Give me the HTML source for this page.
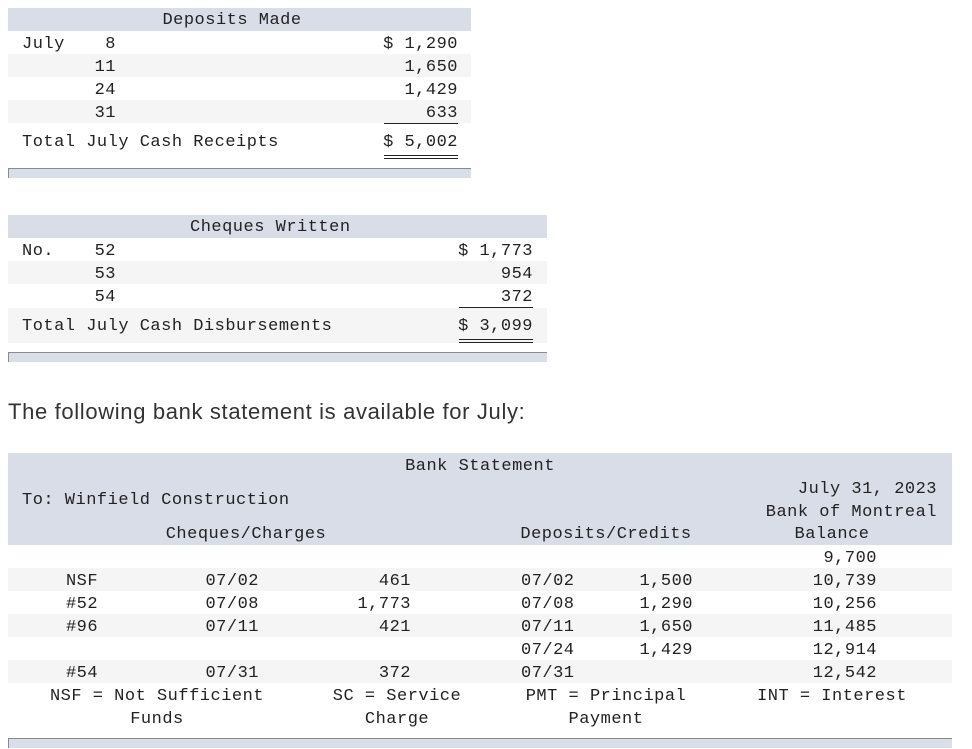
<!DOCTYPE html>
<html><head><meta charset="utf-8"><style>
body{margin:0;width:972px;height:749px;background:#fff;position:relative;overflow:hidden;font-family:"Liberation Mono",monospace;font-size:17px;color:#222}
.b{position:absolute}
.h{background:#d9dde8}
.s{background:#f5f5f5}
.t{position:absolute;line-height:20px;height:20px;white-space:nowrap;letter-spacing:0.5px;margin-top:2px}
.r{text-align:right}
.c{text-align:center}
.bar{position:absolute;background:#dadee8;border-top:1px solid #8a8a8a;border-left:1px solid #8a8a8a;height:9px}
.ul{position:absolute;height:1px;background:#222}
</style></head><body>
<!-- Table 1 -->
<div class="b h" style="left:8px;top:8px;width:463px;height:23px"></div>
<div class="b s" style="left:8px;top:54px;width:463px;height:23px"></div>
<div class="b s" style="left:8px;top:100px;width:463px;height:23px"></div>
<div class="t c" style="left:0;width:464px;top:9px">Deposits Made</div>
<div class="t" style="left:22px;top:33px">July</div>
<div class="t r" style="left:60px;width:56px;top:33px">8</div>
<div class="t r" style="left:60px;width:56px;top:56px">11</div>
<div class="t r" style="left:60px;width:56px;top:79px">24</div>
<div class="t r" style="left:60px;width:56px;top:102px">31</div>
<div class="t r" style="left:300px;width:158px;top:33px">$ 1,290</div>
<div class="t r" style="left:300px;width:158px;top:56px">1,650</div>
<div class="t r" style="left:300px;width:158px;top:79px">1,429</div>
<div class="t r" style="left:300px;width:158px;top:102px">633</div>
<div class="ul" style="left:384px;width:74px;top:123px"></div>
<div class="t" style="left:22px;top:131px">Total July Cash Receipts</div>
<div class="t r" style="left:300px;width:158px;top:131px">$ 5,002</div>
<div class="ul" style="left:384px;width:74px;top:155px"></div>
<div class="ul" style="left:384px;width:74px;top:158px"></div>
<div class="bar" style="left:8px;top:168px;width:462px"></div>

<!-- Table 2 -->
<div class="b h" style="left:8px;top:215px;width:539px;height:23px"></div>
<div class="b s" style="left:8px;top:261px;width:539px;height:23px"></div>
<div class="b s" style="left:8px;top:308px;width:539px;height:35px"></div>
<div class="t" style="left:190px;top:216px">Cheques Written</div>
<div class="t" style="left:22px;top:240px">No.</div>
<div class="t r" style="left:60px;width:56px;top:240px">52</div>
<div class="t r" style="left:60px;width:56px;top:263px">53</div>
<div class="t r" style="left:60px;width:56px;top:286px">54</div>
<div class="t r" style="left:380px;width:153px;top:240px">$ 1,773</div>
<div class="t r" style="left:380px;width:153px;top:263px">954</div>
<div class="t r" style="left:380px;width:153px;top:286px">372</div>
<div class="ul" style="left:459px;width:74px;top:307px"></div>
<div class="t" style="left:22px;top:315px">Total July Cash Disbursements</div>
<div class="t r" style="left:380px;width:153px;top:315px">$ 3,099</div>
<div class="ul" style="left:459px;width:74px;top:339px"></div>
<div class="ul" style="left:459px;width:74px;top:342px"></div>
<div class="bar" style="left:8px;top:352px;width:538px"></div>

<div class="t" style="left:8px;top:397px;height:26px;line-height:26px;font-family:'Liberation Sans',sans-serif;font-size:22px;color:#333;letter-spacing:0.65px">The following bank statement is available for July:</div>

<!-- Bank statement -->
<div class="b h" style="left:8px;top:453px;width:944px;height:92px"></div>
<div class="b s" style="left:8px;top:568px;width:944px;height:23px"></div>
<div class="b s" style="left:8px;top:614px;width:944px;height:23px"></div>
<div class="b s" style="left:8px;top:660px;width:944px;height:23px"></div>
<div class="t c" style="left:280px;width:400px;top:455px">Bank Statement</div>
<div class="t" style="left:22px;top:489px">To: Winfield Construction</div>
<div class="t r" style="left:700px;width:237px;top:478px">July 31, 2023</div>
<div class="t r" style="left:700px;width:237px;top:501px">Bank of Montreal</div>
<div class="t c" style="left:96px;width:300px;top:523px">Cheques/Charges</div>
<div class="t c" style="left:456px;width:300px;top:523px">Deposits/Credits</div>
<div class="t c" style="left:732px;width:200px;top:523px">Balance</div>

<div class="t r" style="left:700px;width:177px;top:547px">9,700</div>

<div class="t c" style="left:42px;width:80px;top:570px">NSF</div>
<div class="t r" style="left:150px;width:109px;top:570px">07/02</div>
<div class="t r" style="left:300px;width:111px;top:570px">461</div>
<div class="t" style="left:521px;top:570px">07/02</div>
<div class="t r" style="left:600px;width:93px;top:570px">1,500</div>
<div class="t r" style="left:700px;width:177px;top:570px">10,739</div>

<div class="t c" style="left:42px;width:80px;top:593px">#52</div>
<div class="t r" style="left:150px;width:109px;top:593px">07/08</div>
<div class="t r" style="left:300px;width:111px;top:593px">1,773</div>
<div class="t" style="left:521px;top:593px">07/08</div>
<div class="t r" style="left:600px;width:93px;top:593px">1,290</div>
<div class="t r" style="left:700px;width:177px;top:593px">10,256</div>

<div class="t c" style="left:42px;width:80px;top:616px">#96</div>
<div class="t r" style="left:150px;width:109px;top:616px">07/11</div>
<div class="t r" style="left:300px;width:111px;top:616px">421</div>
<div class="t" style="left:521px;top:616px">07/11</div>
<div class="t r" style="left:600px;width:93px;top:616px">1,650</div>
<div class="t r" style="left:700px;width:177px;top:616px">11,485</div>

<div class="t" style="left:521px;top:639px">07/24</div>
<div class="t r" style="left:600px;width:93px;top:639px">1,429</div>
<div class="t r" style="left:700px;width:177px;top:639px">12,914</div>

<div class="t c" style="left:42px;width:80px;top:662px">#54</div>
<div class="t r" style="left:150px;width:109px;top:662px">07/31</div>
<div class="t r" style="left:300px;width:111px;top:662px">372</div>
<div class="t" style="left:521px;top:662px">07/31</div>
<div class="t r" style="left:700px;width:177px;top:662px">12,542</div>

<div class="t c" style="left:7px;width:300px;top:685px">NSF = Not Sufficient</div>
<div class="t c" style="left:7px;width:300px;top:708px">Funds</div>
<div class="t c" style="left:297px;width:200px;top:685px">SC = Service</div>
<div class="t c" style="left:297px;width:200px;top:708px">Charge</div>
<div class="t c" style="left:456px;width:300px;top:685px">PMT = Principal</div>
<div class="t c" style="left:456px;width:300px;top:708px">Payment</div>
<div class="t c" style="left:732px;width:200px;top:685px">INT = Interest</div>

<div class="bar" style="left:8px;top:738px;width:943px"></div>
</body></html>
